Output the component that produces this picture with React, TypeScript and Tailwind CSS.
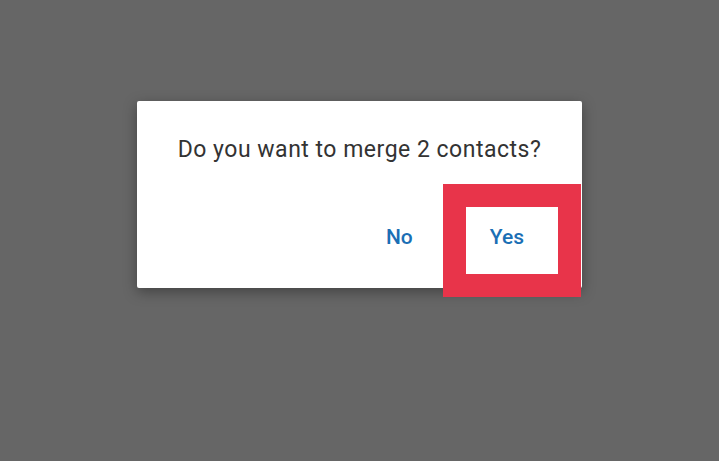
import React from 'react';

export default function App() {
  return (
    <div className="w-[719px] h-[461px] bg-[#666666] flex items-start pt-[101px] pl-[137px] font-['Roboto',sans-serif]">
      <div className="relative w-[445px] h-[187px] bg-white rounded-[2px] shadow-[0_4px_14px_rgba(0,0,0,0.35)] flex flex-col">
        <p className="pt-[34px] text-center text-[23px] leading-[30px] text-[#333333] tracking-[0.5px]">
          Do you want to merge 2 contacts?
        </p>
        <div className="flex justify-end gap-[77px] pr-[58px] pt-[59px]">
          <button className="text-[21px] leading-[26px] font-medium text-[#1b6fb5]">No</button>
          <button className="text-[21px] leading-[26px] font-medium text-[#1b6fb5]">Yes</button>
        </div>
        {/* highlight box around Yes */}
        <div className="absolute left-[306px] top-[83px] w-[138px] h-[113px] border-[23px] border-[#e8344a]" />
      </div>
    </div>
  );
}
